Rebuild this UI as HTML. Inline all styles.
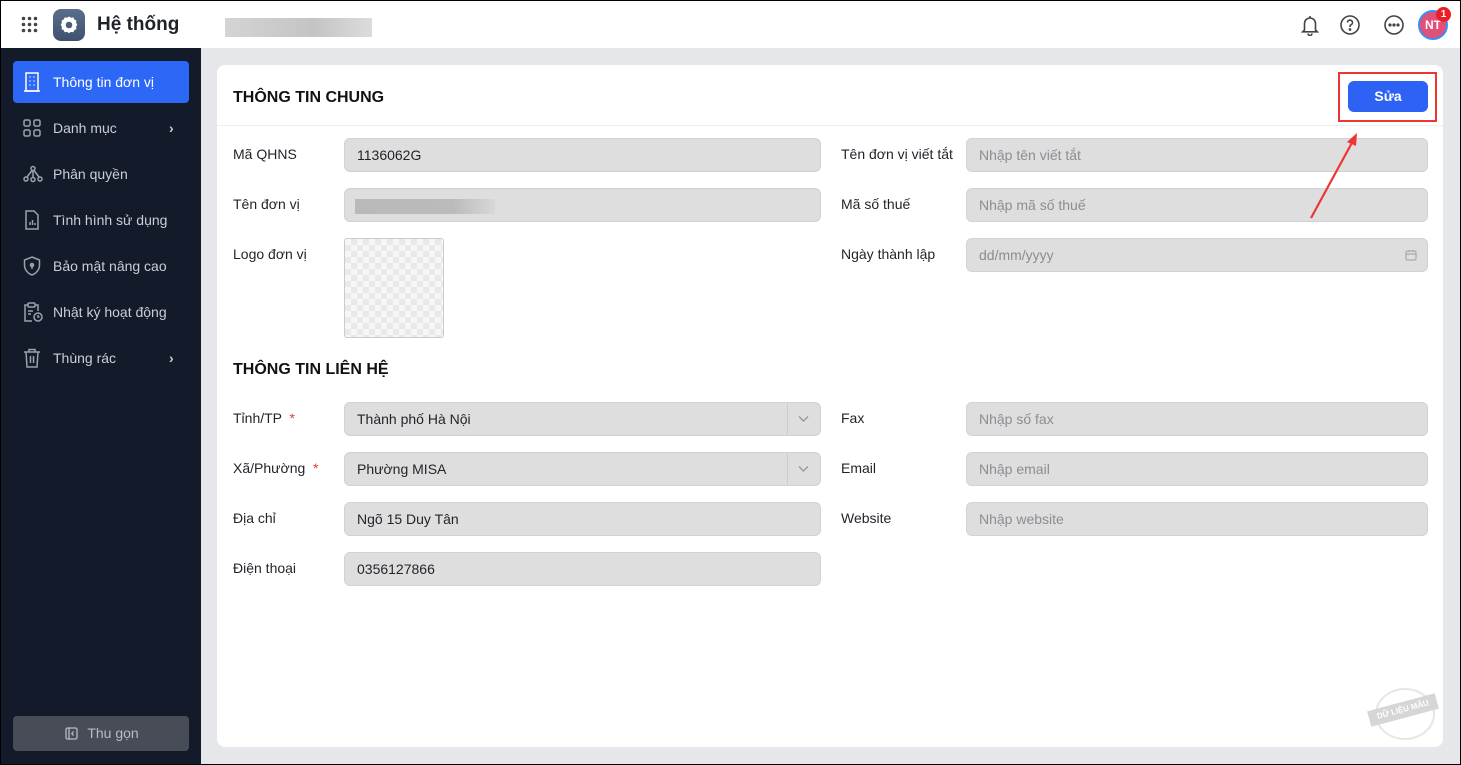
<!DOCTYPE html>
<html><head><meta charset="utf-8"><style>
*{box-sizing:border-box;margin:0;padding:0}
body{width:1461px;height:765px;overflow:hidden;font-family:"Liberation Sans",sans-serif;background:#e6e7eb;position:relative;font-size:14px;color:#1f2329}
.frame{position:absolute;inset:0;border:1px solid #000;pointer-events:none;z-index:10}
.hdr{position:absolute;left:0;top:0;width:1461px;height:48px;background:#fff}
.side{position:absolute;left:0;top:48px;width:201px;height:717px;background:#131a29}
.nav{position:absolute;left:13px;width:176px;height:42px;display:flex;align-items:center;color:#c9ced8;font-size:14px}
.nav svg{position:absolute;left:10px}
.nav span{position:absolute;left:40px}
.nav .chev{position:absolute;left:156px;font-size:14px;color:#c9ced8}
.card{position:absolute;left:217px;top:65px;width:1226px;height:682px;background:#fff;border-radius:8px}
.lbl{position:absolute;font-size:14px;color:#1f2329}
.inp{position:absolute;height:34px;background:#dedede;border:1px solid #d2d2d2;border-radius:6px;font-size:14px;padding:0 12px;line-height:32px;color:#1f2329}
.ph{color:#8a8d93}
.star{color:#e53935}
</style></head><body>
<div class="hdr">
 <svg style="position:absolute;left:21px;top:16px" width="17" height="17" viewBox="0 0 17 17" fill="#444"><circle cx="2.5" cy="2.5" r="1.8"/><circle cx="8.5" cy="2.5" r="1.8"/><circle cx="14.5" cy="2.5" r="1.8"/><circle cx="2.5" cy="8.5" r="1.8"/><circle cx="8.5" cy="8.5" r="1.8"/><circle cx="14.5" cy="8.5" r="1.8"/><circle cx="2.5" cy="14.5" r="1.8"/><circle cx="8.5" cy="14.5" r="1.8"/><circle cx="14.5" cy="14.5" r="1.8"/></svg>
 <div style="position:absolute;left:53px;top:9px;width:32px;height:32px;border-radius:8px;background:linear-gradient(#5a6e8c,#3f516e)"></div>
 <svg style="position:absolute;left:59px;top:15px" width="20" height="20" viewBox="0 0 20 20"><path d="M10 1.5l2 1.2 2.3-.3 1 2.1 2.1 1-.3 2.3 1.2 2-1.2 2 .3 2.3-2.1 1-1 2.1-2.3-.3-2 1.2-2-1.2-2.3.3-1-2.1-2.1-1 .3-2.3-1.2-2 1.2-2-.3-2.3 2.1-1 1-2.1 2.3.3z" fill="#fff"/><circle cx="10" cy="10" r="3.3" fill="#4b5d7b"/></svg>
 <div style="position:absolute;left:97px;top:14px;font-size:19px;font-weight:bold;color:#1f2329">Hệ thống</div>
 <div style="position:absolute;left:225px;top:18px;width:147px;height:19px;background:linear-gradient(90deg,#d4d4d4,#c4c4c4 60%,#dcdcdc)"></div>
 <svg style="position:absolute;left:1300px;top:14px" width="20" height="22" viewBox="0 0 20 22" fill="none" stroke="#444" stroke-width="1.6"><path d="M10 2v1.5M4.5 16V9.5a5.5 5.5 0 0 1 11 0V16l1.8 1.8H2.7z"/><path d="M8 19.5a2 2 0 0 0 4 0"/></svg>
 <svg style="position:absolute;left:1340px;top:15px" width="20" height="20" viewBox="0 0 20 20" fill="none" stroke="#444" stroke-width="1.6"><circle cx="10" cy="10" r="9"/><path d="M7.5 7.5a2.5 2.5 0 1 1 3.3 2.4c-.6.3-.8.7-.8 1.4v.7"/><circle cx="10" cy="14.5" r=".6" fill="#444"/></svg>
 <svg style="position:absolute;left:1384px;top:15px" width="20" height="20" viewBox="0 0 20 20" fill="none" stroke="#444" stroke-width="1.6"><circle cx="10" cy="10" r="9"/><circle cx="6" cy="10" r=".8" fill="#444"/><circle cx="10" cy="10" r=".8" fill="#444"/><circle cx="14" cy="10" r=".8" fill="#444"/></svg>
 <div style="position:absolute;left:1418px;top:10px;width:30px;height:30px;border-radius:50%;background:#e0507a;border:2px solid #3a8ef0;color:#fff;font-size:12px;font-weight:bold;text-align:center;line-height:26px">NT</div>
 <div style="position:absolute;left:1436px;top:7px;width:15px;height:15px;border-radius:50%;background:#ee1c25;color:#fff;font-size:10px;font-weight:bold;text-align:center;line-height:15px">1</div>
</div>
<div class="side">
 <div class="nav" style="top:13px;background:#2d67f6;border-radius:4px;color:#fff">
  <svg width="18" height="20" viewBox="0 0 18 20" fill="none" stroke="#fff" stroke-width="1.5"><rect x="3" y="1" width="12" height="18"/><path d="M1 19h16M6.5 5h1M10.5 5h1M6.5 9h1M10.5 9h1M6.5 13h1M10.5 13h1"/></svg><span>Thông tin đơn vị</span></div>
 <div class="nav" style="top:59px"><svg width="18" height="18" viewBox="0 0 18 18" fill="none" stroke="#9aa1ad" stroke-width="1.5"><rect x="1" y="1" width="6" height="6" rx="1.5"/><rect x="11" y="1" width="6" height="6" rx="1.5"/><rect x="1" y="11" width="6" height="6" rx="1.5"/><rect x="11" y="11" width="6" height="6" rx="1.5"/></svg><span>Danh mục</span><b class="chev">›</b></div>
 <div class="nav" style="top:105px"><svg width="20" height="18" viewBox="0 0 20 18" fill="none" stroke="#9aa1ad" stroke-width="1.5"><circle cx="10" cy="3.5" r="2"/><circle cx="3" cy="14" r="2"/><circle cx="17" cy="14" r="2"/><circle cx="10" cy="14.5" r="2"/><path d="M9 5.5L4 12M11 5.5l5 6.5M10 5.5v7"/></svg><span>Phân quyền</span></div>
 <div class="nav" style="top:151px"><svg width="18" height="20" viewBox="0 0 18 20" fill="none" stroke="#9aa1ad" stroke-width="1.5"><path d="M3 1h8l4 4v14H3z"/><path d="M7 15v-3M9.5 15v-5M12 15v-2"/></svg><span>Tình hình sử dụng</span></div>
 <div class="nav" style="top:197px"><svg width="18" height="20" viewBox="0 0 18 20" fill="none" stroke="#9aa1ad" stroke-width="1.5"><path d="M9 1l7.5 3v5c0 5-3.5 8.5-7.5 10C5 17.5 1.5 14 1.5 9V4z"/><circle cx="9" cy="9" r="1.5" fill="#9aa1ad"/><path d="M9 10v3"/></svg><span>Bảo mật nâng cao</span></div>
 <div class="nav" style="top:243px"><svg width="20" height="20" viewBox="0 0 20 20" fill="none" stroke="#9aa1ad" stroke-width="1.5"><path d="M9 19H2V3h3M12 3h3v6"/><rect x="5" y="1" width="7" height="4" rx="1"/><path d="M5 9h5M5 12h3"/><circle cx="15" cy="15" r="4"/><path d="M15 13v2h1.5"/></svg><span>Nhật ký hoạt động</span></div>
 <div class="nav" style="top:289px"><svg width="18" height="20" viewBox="0 0 18 20" fill="none" stroke="#9aa1ad" stroke-width="1.5"><path d="M1 4h16M6 4V1.5h6V4M3 4l1 15h10l1-15M7.5 8v7M10.5 8v7"/></svg><span>Thùng rác</span><b class="chev">›</b></div>
 <div style="position:absolute;left:13px;top:668px;width:176px;height:35px;background:#474c57;border-radius:4px;color:#b7bcc6;font-size:14px;text-align:center;line-height:35px"><svg style="position:absolute;left:52px;top:11px" width="13" height="13" viewBox="0 0 13 13" fill="none" stroke="#b7bcc6" stroke-width="1.3"><rect x="1" y="1" width="11" height="11" rx="1.5"/><path d="M4 1v11M8.5 4.5L6.8 6.5l1.7 2"/></svg><span style="margin-left:24px">Thu gọn</span></div>
</div>
<div class="card">
 <div style="position:absolute;left:16px;top:24px;font-size:16px;font-weight:bold;color:#111">THÔNG TIN CHUNG</div>
 <div style="position:absolute;left:0;top:60px;width:1226px;height:1px;background:#eceef1"></div>
 <div style="position:absolute;left:1131px;top:16px;width:80px;height:31px;background:#2d62f5;border-radius:6px;color:#fff;font-weight:bold;font-size:14px;text-align:center;line-height:31px">Sửa</div>
</div>
<div style="position:absolute;left:1338px;top:72px;width:99px;height:50px;border:2.5px solid #ee3535"></div>

<div class="lbl" style="left:233px;top:146px">Mã QHNS</div>
<div class="inp" style="left:344px;top:138px;width:477px">1136062G</div>
<div class="lbl" style="left:233px;top:196px">Tên đơn vị</div>
<div class="inp" style="left:344px;top:188px;width:477px"><div style="position:absolute;left:10px;top:10px;width:140px;height:15px;background:linear-gradient(90deg,#b9b9b9,#bbb 70%,#d8d8d8)"></div></div>
<div class="lbl" style="left:233px;top:246px">Logo đơn vị</div>
<div style="position:absolute;left:344px;top:238px;width:100px;height:100px;border:1px solid #ccc;border-radius:3px;background-color:#f6f6f6;background-image:linear-gradient(45deg,#e9e9e9 25%,transparent 25%,transparent 75%,#e9e9e9 75%),linear-gradient(45deg,#e9e9e9 25%,transparent 25%,transparent 75%,#e9e9e9 75%);background-size:12px 12px;background-position:0 0,6px 6px"></div>

<div class="lbl" style="left:841px;top:146px">Tên đơn vị viết tắt</div>
<div class="inp ph" style="left:966px;top:138px;width:462px">Nhập tên viết tắt</div>
<div class="lbl" style="left:841px;top:196px">Mã số thuế</div>
<div class="inp ph" style="left:966px;top:188px;width:462px">Nhập mã số thuế</div>
<div class="lbl" style="left:841px;top:246px">Ngày thành lập</div>
<div class="inp ph" style="left:966px;top:238px;width:462px">dd/mm/yyyy<svg style="position:absolute;right:10px;top:10px" width="12" height="12" viewBox="0 0 12 12" fill="none" stroke="#aaa" stroke-width="1.2"><rect x="1" y="2" width="10" height="9" rx="1.5"/><path d="M4 1v2M8 1v2M1 5h10"/></svg></div>

<svg style="position:absolute;left:1300px;top:125px;z-index:5" width="70" height="100" viewBox="0 0 70 100"><path d="M11 93L54 14" stroke="#ee3535" stroke-width="2.2"/><path d="M57 8l-10 9 9 4z" fill="#ee3535"/></svg>

<div style="position:absolute;left:233px;top:361px;font-size:16px;font-weight:bold;color:#111">THÔNG TIN LIÊN HỆ</div>

<div class="lbl" style="left:233px;top:410px">Tỉnh/TP <span class="star">&nbsp;*</span></div>
<div class="inp" style="left:344px;top:402px;width:477px">Thành phố Hà Nội<div style="position:absolute;right:32px;top:0;width:1px;height:32px;background:#ccc"></div><svg style="position:absolute;right:11px;top:12px" width="11" height="8" viewBox="0 0 11 8" fill="none" stroke="#999" stroke-width="1.4"><path d="M1 1.5l4.5 4.5 4.5-4.5"/></svg></div>
<div class="lbl" style="left:233px;top:460px">Xã/Phường <span class="star">&nbsp;*</span></div>
<div class="inp" style="left:344px;top:452px;width:477px">Phường MISA<div style="position:absolute;right:32px;top:0;width:1px;height:32px;background:#ccc"></div><svg style="position:absolute;right:11px;top:12px" width="11" height="8" viewBox="0 0 11 8" fill="none" stroke="#999" stroke-width="1.4"><path d="M1 1.5l4.5 4.5 4.5-4.5"/></svg></div>
<div class="lbl" style="left:233px;top:510px">Địa chỉ</div>
<div class="inp" style="left:344px;top:502px;width:477px">Ngõ 15 Duy Tân</div>
<div class="lbl" style="left:233px;top:560px">Điện thoại</div>
<div class="inp" style="left:344px;top:552px;width:477px">0356127866</div>

<div class="lbl" style="left:841px;top:410px">Fax</div>
<div class="inp ph" style="left:966px;top:402px;width:462px">Nhập số fax</div>
<div class="lbl" style="left:841px;top:460px">Email</div>
<div class="inp ph" style="left:966px;top:452px;width:462px">Nhập email</div>
<div class="lbl" style="left:841px;top:510px">Website</div>
<div class="inp ph" style="left:966px;top:502px;width:462px">Nhập website</div>

<div style="position:absolute;left:1375px;top:688px;width:60px;height:52px;border:2px solid #e6e6e6;border-radius:50%"></div>
<div style="position:absolute;left:1368px;top:702px;width:70px;height:16px;background:#d6d6d6;color:#fff;font-size:8px;font-weight:bold;text-align:center;line-height:16px;transform:rotate(-15deg)">DỮ LIỆU MẪU</div>
<div class="frame"></div>
</body></html>
